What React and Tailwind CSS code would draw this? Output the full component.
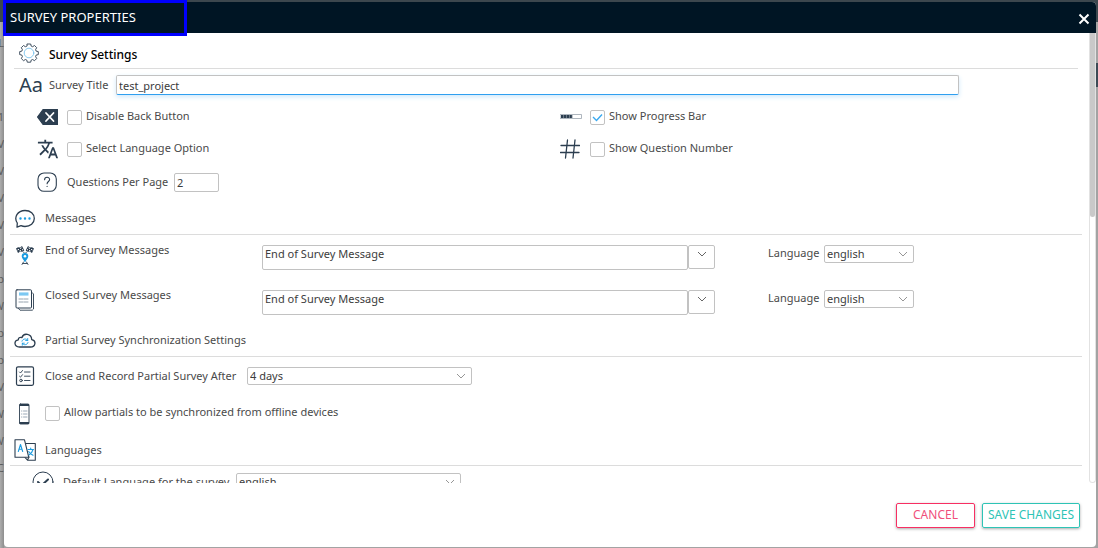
import React, { useState } from "react";
import { MdOutlineTranslate } from "react-icons/md";

const ink = "#2c3e50";
const sky = "#1a9be0";

const backgroundRows = ["1", "V", "V", "V", "V", "V", "p", "W", "p", "p", "V", "W", "W", "C"];

const Icon = ({ children, className = "w-5 h-5", viewBox = "0 0 20 20" }) => (
  <svg
    viewBox={viewBox}
    className={`shrink-0 ${className}`}
    fill="none"
    stroke={ink}
    strokeWidth="1.1"
    strokeLinecap="round"
    strokeLinejoin="round"
    aria-hidden="true"
  >
    {children}
  </svg>
);

const GearIcon = () => (
  <Icon className="mb-1 w-5 h-5">
    <path
      strokeWidth="0.9"
      d="M8.3 1h3.4l.5 2.1 1.4.6 1.9-1.2 2.2 2.2-1.100 1.900.5 1.500 2.200.5v3l-2.200.5-.5 1.500 1.100 1.900-2.200 2.200-1.900-1.200-1.400.6-.5 2.100H8.300l-.5-2.100-1.400-.6-1.900 1.200-2.200-2.200 1.100-1.900-.5-1.500L.7 11.600V8.600l2.200-.5.5-1.500-1.100-1.900 2.200-2.200 1.900 1.200 1.400-.6z"
    />
    <circle cx="10" cy="10" r="4.8" stroke="#7cc4ee" strokeWidth="0.9" />
  </Icon>
);

const ProgressIcon = () => (
  <Icon className="w-[22px] h-5" viewBox="0 0 22 20">
    <rect x="0.5" y="7.5" width="21" height="4" stroke="#9aa4ae" strokeWidth="0.8" />
    <path d="M1 9.500h11.500" strokeWidth="3" strokeLinecap="butt" strokeDasharray="2.500 0.300" />
  </Icon>
);

const BackspaceIcon = () => (
  <Icon className="w-[21px] h-5" viewBox="0 0 21 20">
    <path d="M6 2.500h14.500v15H6L0.500 10z" fill={ink} />
    <path d="M9 6l7.500 8m0-8L9 14" stroke="#fff" strokeWidth="1.800" />
  </Icon>
);

const HashIcon = () => (
  <Icon>
    <path d="M7.500 1l-2 18M15 1l-2 18M1 6.500h18.500M0.500 13.500h18.500" strokeWidth="1.300" />
  </Icon>
);

const HelpIcon = () => (
  <Icon>
    <rect x="1" y="1" width="18.300" height="18.300" rx="6" />
    <path d="M7.600 7.800c0-3.300 5-3.200 5-.3 0 2-2.500 2-2.500 4.300M10.100 14.300v.2" />
  </Icon>
);

const ChatIcon = () => (
  <Icon>
    <path
      d="M2 18.200l.3-4.200C-1.500 8.500 2.500 1.500 10 1.500c5.500 0 9.300 3.500 9.300 8s-4 8-9.300 8c-1.500 0-2.800-.3-4-.8z"
      strokeWidth="1.300"
    />
    <path d="M5.500 9.500h.01M10 9.500h.01M14.500 9.500h.01" stroke={sky} strokeWidth="2.400" />
  </Icon>
);

const FinishIcon = () => (
  <Icon>
    <path
      d="M1 3.500l2-1.200 2 .2 2-1.500 2.300 4.500-2 1.200-2-.2L3 8zM19 3.500l-2-1.200-2 .2L13 1l-2.300 4.500 2 1.200 2-.2L17 8z"
      fill={ink}
      stroke="none"
    />
    <path
      d="M2.500 5l1.500-.7M5 3.500l1.500-.7M4.500 6L6 5.500M7 5l1-.5M17.500 5L16 4.300M15 3.500l-1.500-.7M15.500 6L14 5.500M13 5l-1-.5"
      stroke="#fff"
      strokeWidth="1"
      strokeLinecap="butt"
    />
    <path d="M8.500 7l.8 1M11.500 7l-.8 1M8.500 17L7 19.500M11.500 17l1.500 2.500M8 18.500h4" strokeWidth="0.900" />
    <path
      d="M10 17.500c-1-2.700-3.300-3.900-3.300-6.200a3.300 3.300 0 016.600 0c0 2.300-2.300 3.500-3.300 6.200z"
      fill={sky}
      stroke="none"
    />
    <circle cx="10" cy="11.300" r="1.300" fill="#fff" stroke="none" />
  </Icon>
);

const PaperIcon = () => (
  <Icon className="w-5 h-[22px]" viewBox="0 0 20 22">
    <path d="M17 3.500l1.500 1.500v15l-1.200 1.200H5L3.500 19.500" strokeWidth="0.900" />
    <rect x="1" y="0.800" width="15.500" height="18.200" rx="1" strokeWidth="1" />
    <path d="M4 5h9.500" stroke="#7cc8f2" strokeWidth="3.200" strokeLinecap="butt" />
    <path d="M4 10h9.500M4 13h9.500" stroke="#8b98a5" strokeWidth="0.900" strokeDasharray="4 1" />
  </Icon>
);

const CloudIcon = () => (
  <Icon className="w-[22px] h-5" viewBox="0 0 22 20">
    <path
      d="M5.500 16h11c5.300 0 6-6.500 1.200-7.400C17.500 2.500 9.500 1.500 8 6.500 5.500 5.800 4.300 7 4.300 8.800-.3 9.500-.3 15.500 5.500 16z"
      strokeWidth="1.300"
    />
    <path
      d="M8 10.200c.6-2.800 4.700-3 5.700-.8m0-1.900v2h-2M14 11.500c-.6 2.800-4.700 3-5.700.8m0 1.900v-2h2"
      stroke={sky}
      strokeWidth="0.900"
    />
  </Icon>
);

const ChecklistIcon = () => (
  <Icon>
    <rect x="1.500" y="0.800" width="17" height="18.500" rx="1.500" strokeWidth="1.200" />
    <path
      d="M4.500 6l1 1 2-2.500M4.500 10.200l1 1 2-2.500M9.500 6H15M9.500 10.200H15M9.500 14.500H15"
      strokeWidth="0.900"
    />
    <circle cx="6" cy="14.500" r="1.300" strokeWidth="0.900" />
  </Icon>
);

const PhoneIcon = () => (
  <Icon className="w-5 h-[22px]" viewBox="0 0 20 22">
    <rect x="5.500" y="1" width="9.500" height="20" rx="1" strokeWidth="0.900" />
    <path d="M5.500 2h9.500M5.500 20h9.500" strokeWidth="2" strokeLinecap="butt" />
    <path
      d="M7.500 8h.4M7.500 11h.4M7.500 14h.4M9.500 8h3.500M9.500 11h3.500M9.500 14h3.500"
      stroke="#8193a5"
      strokeWidth="0.800"
    />
  </Icon>
);

const LanguagesIcon = () => (
  <Icon className="w-[22px] h-[22px]" viewBox="0 0 22 22">
    <path d="M12 4.500h9.300v16.700H13.500L11 18.500M13.500 21l1.500-3" />
    <path d="M1 0.800h9.500l4.300 17.500H1z" fill="#fff" />
    <path
      d="M4.300 12.500l2.200-7 2.200 7M5.100 10.300h2.800M14 10.500h5.500M16.700 9v1.500M19 10.500c-.7 2.800-2 4.300-4 5.500M14.700 12.500c1 2 2.500 3 4.300 3.800"
      stroke={sky}
      strokeWidth="1.100"
    />
  </Icon>
);

const CheckCircleIcon = () => (
  <Icon className="w-[22px] h-[22px]" viewBox="0 0 22 22">
    <circle cx="11" cy="11" r="10" strokeWidth="1" />
    <path d="M6 11l3.500 3.500L16 8.500" strokeWidth="2" />
  </Icon>
);

const Chevron = ({ className = "" }) => (
  <svg viewBox="0 0 10 6" className={`w-[10px] h-[6px] ${className}`} fill="none" aria-hidden="true">
    <path d="M1 1l4 4 4-4" stroke="currentColor" strokeWidth="0.9" />
  </svg>
);

const SectionHeading = ({ icon, children, className = "" }) => (
  <h2 className={`flex items-center gap-[9px] border-b border-[#dcdcdc] pl-1 ${className}`}>
    <span className="flex w-[22px] justify-center">{icon}</span>
    {children}
  </h2>
);

const Checkbox = ({ icon, label, defaultChecked = false }) => (
  <div className="flex items-center">
    {icon}
    <label className="flex items-center gap-1">
      <span className="relative flex">
        <input
          type="checkbox"
          defaultChecked={defaultChecked}
          className="peer w-[15px] h-[15px] appearance-none rounded-xs border border-[#c2c2c2] bg-white"
        />
        <svg
          viewBox="0 0 15 15"
          className="pointer-events-none absolute inset-0 hidden peer-checked:block"
          fill="none"
          aria-hidden="true"
        >
          <path d="M3 7l3.500 3.500L12 4.500" stroke="#3aa9f0" strokeWidth="1.400" />
        </svg>
      </span>
      <span className="pb-[2px]">{label}</span>
    </label>
  </div>
);

const Select = ({ id, options, className = "" }) => (
  <span className={`relative flex h-[18px] ${className}`}>
    <select
      id={id}
      className="w-full appearance-none rounded-xs border border-[#c2c2c2] bg-white px-[2px] leading-4 text-[#3c3c3c]"
    >
      {options.map((option) => (
        <option key={option}>{option}</option>
      ))}
    </select>
    <Chevron className="pointer-events-none absolute right-[6px] top-[6px] text-[#8a8a8a]" />
  </span>
);

const MessageRow = ({ id, icon, label }) => (
  <div className="flex h-[45px] items-start pt-[10px]">
    <div className="flex w-[252px] shrink-0 gap-[9px] pl-1">
      <span className="flex h-5 w-[22px] items-center justify-center">{icon}</span>
      <label htmlFor={id} className="leading-[9px]">{label}</label>
    </div>
    <textarea
      id={id}
      defaultValue="End of Survey Message"
      className="h-[25px] min-w-0 flex-1 resize-none overflow-hidden rounded-xs border border-[#c2c2c2] px-[2px] leading-4 text-[#3c3c3c]"
    />
    <button
      type="button"
      aria-label={`Expand ${label}`}
      className="flex h-6 w-[27px] justify-center rounded-xs border border-[#c2c2c2] pt-[5px] text-[#555]"
    >
      <Chevron />
    </button>
    <label htmlFor={`${id}-language`} className="ml-[53px] mr-1 w-[52px] leading-4">
      Language
    </label>
    <Select
      id={`${id}-language`}
      options={["english", "french", "spanish"]}
      className="mr-[168px] w-[90px]"
    />
  </div>
);

const App = () => {
  const [title, setTitle] = useState("test_project");

  return (
    <div
      className="relative flex h-screen flex-col overflow-hidden bg-[#a3a3a3] pb-px pl-1 pr-[2px] pt-[2px] text-[11px] text-[#4a4a4a]"
      style={{ fontFamily: '"Noto Sans", sans-serif' }}
    >
      {/* dimmed page behind the dialog */}
      <div className="absolute inset-x-0 top-0 h-[22px] bg-[#3c474e]" />
      <div className="absolute right-0 top-[63px] h-6 w-[2px] bg-[#3d4a55]" />
      <div className="absolute bottom-0 left-0 top-[22px] w-1 overflow-hidden bg-linear-to-r from-[#adadad] to-[#8e8e8e] text-[#5c5c5c]" aria-hidden="true">
        <div className="mt-[13px] flex h-[69px] justify-end">L</div>
        {backgroundRows.map((text, i) => (
          <div key={i} className="flex h-[27px] items-center justify-end first-of-type:text-[#2a6d8a]">
            {text}
          </div>
        ))}
      </div>

      <div
        className="relative flex min-h-0 flex-1 flex-col overflow-hidden rounded-sm bg-white"
        role="dialog"
        aria-labelledby="dialog-title"
      >
        <header className="flex h-[31px] shrink-0 items-center justify-between bg-[#001524] pl-[6px] pr-[6px] text-white">
          <h1 id="dialog-title" className="text-[13px]">SURVEY PROPERTIES</h1>
          <button type="button" aria-label="Close" className="flex pt-[3px]">
            <svg viewBox="0 0 12 12" className="h-3 w-3" fill="none" aria-hidden="true">
              <path d="M1.500 1.500l9 9m0-9l-9 9" stroke="currentColor" strokeWidth="2" />
            </svg>
          </button>
        </header>

        <div className="flex min-h-0 flex-1">
          <main className="min-w-0 flex-1 overflow-hidden pl-[6px] pr-[7px]">
            <h2 className="mx-1 flex h-9 items-center gap-[10px] border-b border-[#dcdcdc] pl-[5px] pt-2 text-xs font-medium text-black">
              <GearIcon />
              Survey Settings
            </h2>

            <div className="flex h-8 items-center pl-[9px]">
              <span className="w-[30px] text-xl text-[#2c3e50]" aria-hidden="true">Aa</span>
              <label htmlFor="survey-title" className="w-[67px]">Survey Title</label>
              <input
                id="survey-title"
                value={title}
                onChange={(e) => setTitle(e.target.value)}
                className="mr-[123px] h-5 min-w-0 flex-1 rounded-xs border border-[#c2c2c2] border-b-[#2f9ff0] px-[2px] text-[#3c3c3c] shadow-[0_2px_5px_#cfe8fb] outline-none"
              />
            </div>

            <div className="grid grid-cols-[523px_1fr] pl-[27px]">
              <div className="flex h-8 items-center">
                <Checkbox icon={<span className="w-[30px]"><BackspaceIcon /></span>} label="Disable Back Button" />
              </div>
              <div className="flex h-8 items-center">
                <Checkbox icon={<span className="w-[30px]"><ProgressIcon /></span>} label="Show Progress Bar" defaultChecked />
              </div>
              <div className="flex h-8 items-center">
                <Checkbox
                  icon={
                    <span className="w-[30px]">
                      <MdOutlineTranslate className="h-[22px] w-[22px] text-[#2c3e50]" aria-hidden="true" />
                    </span>
                  }
                  label="Select Language Option"
                />
              </div>
              <div className="flex h-8 items-center">
                <Checkbox icon={<span className="w-[30px]"><HashIcon /></span>} label="Show Question Number" />
              </div>
            </div>

            <div className="flex h-[34px] items-center pl-[27px]">
              <span className="w-[30px]"><HelpIcon /></span>
              <label htmlFor="per-page" className="w-[107px]">Questions Per Page</label>
              <input
                id="per-page"
                defaultValue="2"
                className="h-[19px] w-[45px] rounded-xs border border-[#c2c2c2] px-[2px] text-[#3c3c3c]"
              />
            </div>

            <SectionHeading icon={<ChatIcon />} className="h-9 pt-1">Messages</SectionHeading>
            <MessageRow id="end-message" icon={<FinishIcon />} label="End of Survey Messages" />
            <MessageRow id="closed-message" icon={<PaperIcon />} label="Closed Survey Messages" />

            <SectionHeading icon={<CloudIcon />} className="h-8">
              Partial Survey Synchronization Settings
            </SectionHeading>
            <div className="flex h-[38px] items-center gap-[9px] pl-1">
              <span className="flex w-[22px] justify-center"><ChecklistIcon /></span>
              <div className="flex items-center">
                <label htmlFor="close-after" className="w-[202px]">Close and Record Partial Survey After</label>
                <Select id="close-after" options={["4 days", "7 days", "14 days"]} className="w-[225px]" />
              </div>
            </div>
            <div className="flex h-9 items-center pl-1 pt-px">
              <Checkbox
                icon={<span className="flex w-[31px]"><PhoneIcon /></span>}
                label="Allow partials to be synchronized from offline devices"
              />
            </div>

            <SectionHeading icon={<LanguagesIcon />} className="h-[35px] pt-1">Languages</SectionHeading>
            <div className="flex h-8 items-center pl-[22px]">
              <span className="w-[31px]"><CheckCircleIcon /></span>
              <label htmlFor="default-language" className="w-[173px]">Default Language for the survey</label>
              <Select id="default-language" options={["english", "french", "spanish"]} className="w-[225px]" />
            </div>
          </main>

          <div className="w-[7px] shrink-0 rounded-b-sm border border-t-0 border-[#e2e2e2]" aria-hidden="true">
            <div className="h-[41%] rounded-b-sm bg-[#c9c9c9]" />
          </div>
        </div>

        <footer className="flex h-16 shrink-0 items-center justify-end gap-[7px] pr-4">
          <button
            type="button"
            className="h-[25px] w-[79px] rounded-xs border border-[#f72f63] text-xs text-[#f04f7b] shadow-[0_1px_3px_#aaa]"
          >
            CANCEL
          </button>
          <button
            type="button"
            className="h-[25px] w-[98px] rounded-xs border border-[#2ec4b6] text-xs text-[#2ec4b6] shadow-[0_1px_3px_#aaa]"
          >
            SAVE CHANGES
          </button>
        </footer>
      </div>

      <div className="pointer-events-none absolute left-[3px] top-0 h-9 w-[184px] border-[3px] border-[#0000ff]" />
    </div>
  );
};

export default App;
